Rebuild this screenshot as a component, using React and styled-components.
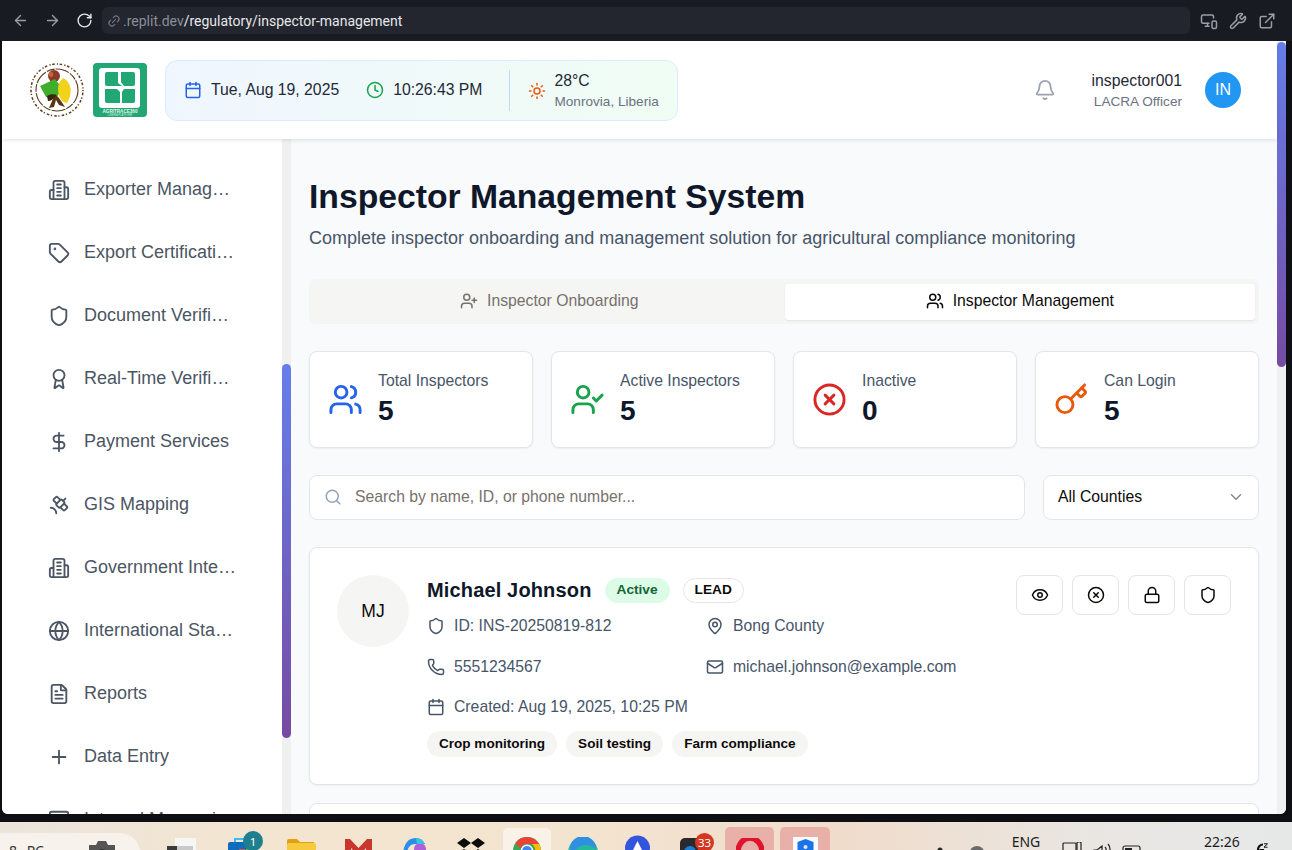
import React from "react";
import styled, { createGlobalStyle } from "styled-components";
import {
  ArrowLeft, ArrowRight, RotateCw, Link2, MonitorSmartphone, Wrench, ExternalLink,
  Calendar, Clock, Sun, Bell, Tag, Shield, Award, DollarSign, Satellite,
  Globe, FileText, Plus, MessageSquare, UserPlus, Users, UserCheck, XCircle, Key,
  Search, ChevronDown, MapPin, Phone, Mail, Eye, Lock,
} from "lucide-react";

const Global = createGlobalStyle`
  html, body { margin: 0; padding: 0; overflow: hidden; background: #0e0f15; }
  * { box-sizing: border-box; }
  body { font-family: "Liberation Sans", Arial, sans-serif; }
`;

const Screen = styled.div`
  width: 1292px;
  height: 850px;
  display: flex;
  flex-direction: column;
  overflow: hidden;
  background: #0e0f15;
`;

/* browser bar */
const Toolbar = styled.div`
  height: 41px;
  flex: none;
  display: flex;
  align-items: center;
  background: #191b23;
  color: #9a9da5;
`;
const NavIcons = styled.div`
  width: 102px;
  flex: none;
  display: flex;
  align-items: center;
  padding-left: 12px;
  gap: 15px;
`;
const AddressBar = styled.div`
  width: 1088px;
  height: 27px;
  display: flex;
  align-items: center;
  gap: 2px;
  padding-left: 5px;
  border-radius: 6px;
  background: #23262f;
  font-family: Roboto, sans-serif;
  font-size: 14px;
`;
const Host = styled.span`
  color: #8b8e96;
`;
const UrlPath = styled.span`
  color: #e6e7ea;
  margin-left: -2px;
`;
const ToolIcons = styled.div`
  display: flex;
  align-items: center;
  gap: 11px;
  margin-left: 10px;
`;

/* app window */
const Viewport = styled.div`
  height: 773px;
  flex: none;
  width: 1284px;
  margin-left: 2px;
  display: flex;
  overflow: hidden;
  border-radius: 0 0 6px 6px;
  background: #fff;
`;
const AppColumn = styled.div`
  width: 1275px;
  flex: none;
  display: flex;
  flex-direction: column;
`;
const PageTrack = styled.div`
  width: 9px;
  flex: none;
  background: #f1f1f1;
`;
const Thumb = styled.div`
  width: 9px;
  border-radius: 5px;
  background: linear-gradient(180deg, #667eea, #764ba2);
  height: ${(p) => p.$height}px;
  margin-top: ${(p) => p.$top}px;
`;

const Header = styled.header`
  height: 98px;
  flex: none;
  display: flex;
  align-items: center;
  padding: 0 36px 0 27px;
  background: #fff;
  box-shadow: 0 1px 4px rgba(0, 0, 0, 0.12);
  position: relative;
  z-index: 2;
`;
const Logos = styled.div`
  display: flex;
  align-items: center;
  gap: 8px;
`;
const InfoStrip = styled.div`
  width: 513px;
  height: 61px;
  margin-left: 18px;
  margin-top: 1px;
  display: flex;
  align-items: center;
  padding-left: 18px;
  border: 1px solid #dbeafe;
  border-radius: 12px;
  background: linear-gradient(90deg, #eff6ff, #f0fdf4);
  color: #1f2937;
  font-size: 15.75px;
`;
const InfoItem = styled.div`
  display: flex;
  align-items: center;
  gap: ${(p) => p.$inner}px;
  margin-right: ${(p) => p.$gap}px;
  padding-bottom: ${(p) => p.$lift || 0}px;
`;
const Divider = styled.div`
  width: 1px;
  height: 41px;
  background: #bfdbfe;
  margin-right: 18px;
`;
const Weather = styled.div`
  display: flex;
  flex-direction: column;
  gap: 4px;
  line-height: 18px;
`;
const WeatherPlace = styled.span`
  font-size: 13.6px;
  line-height: 16px;
  color: #6b7280;
`;
const HeaderRight = styled.div`
  margin-left: auto;
  display: flex;
  align-items: center;
`;
const User = styled.div`
  display: flex;
  flex-direction: column;
  align-items: flex-end;
  margin: 1px 23px 0 36px;
`;
const UserName = styled.span`
  font-size: 15.8px;
  line-height: 22px;
  color: #1f2937;
`;
const UserRole = styled.span`
  font-size: 13.6px;
  line-height: 20px;
  color: #6b7280;
`;
const UserAvatar = styled.div`
  width: 36px;
  height: 36px;
  border-radius: 50%;
  display: flex;
  align-items: center;
  justify-content: center;
  background: #2196f3;
  color: #fff;
  font-size: 16px;
`;

const Body = styled.div`
  flex: 1;
  min-height: 0;
  display: flex;
`;
const Sidebar = styled.nav`
  width: 280px;
  flex: none;
  padding: 19px 0 0 46px;
  display: flex;
  flex-direction: column;
  overflow: hidden;
  background: #fff;
`;
const NavItem = styled.div`
  height: 63px;
  flex: none;
  display: flex;
  align-items: center;
  gap: 14px;
  color: #4b5563;
`;
const NavLabel = styled.span`
  max-width: ${(p) => p.$max}px;
  font-size: 18px;
  white-space: nowrap;
  overflow: hidden;
  text-overflow: ellipsis;
`;
const SideTrack = styled.div`
  width: 9px;
  flex: none;
  background: #f0f0f0;
`;
const Main = styled.main`
  flex: 1;
  min-width: 0;
  overflow: hidden;
  padding: 37px 18px 0 18px;
  background: #f8fafc;
`;
const Title = styled.h1`
  margin: 0;
  font-size: 33.7px;
  line-height: 40px;
  font-weight: 700;
  color: #0f172a;
`;
const Subtitle = styled.p`
  margin: 8px 0 0;
  font-size: 18px;
  line-height: 28px;
  color: #475569;
`;
const Tabs = styled.div`
  margin-top: 27px;
  height: 45px;
  display: grid;
  grid-template-columns: 1fr 1fr;
  padding: 5px 4px 5px 5px;
  border-radius: 6px;
  background: #f5f5f4;
`;
const TabButton = styled.div`
  display: flex;
  align-items: center;
  justify-content: center;
  gap: 9px;
  font-size: 15.75px;
  padding-bottom: 2px;
  border-radius: 4px;
  height: 36px;
  color: ${(p) => (p.$active ? "#0c0a09" : "#78716c")};
  background: ${(p) => (p.$active ? "#fff" : "transparent")};
  box-shadow: ${(p) => (p.$active ? "0 1px 2px rgba(0,0,0,0.08)" : "none")};
`;
const Stats = styled.div`
  margin-top: 27px;
  display: grid;
  grid-template-columns: repeat(4, 1fr);
  gap: 18px;
`;
const Panel = styled.div`
  background: #fff;
  border: 1px solid #e7e5e4;
  border-radius: 8px;
  box-shadow: 0 1px 2px rgba(0, 0, 0, 0.05);
`;
const StatCard = styled(Panel)`
  height: 97px;
  display: flex;
  align-items: flex-start;
  padding: 18px 0 0 18px;
  gap: 15px;
  svg { margin-top: 12px; }
`;
const StatText = styled.div`
  display: flex;
  flex-direction: column;
`;
const StatLabel = styled.span`
  font-size: 15.75px;
  line-height: 22px;
  color: #475569;
`;
const StatValue = styled.span`
  font-size: 28px;
  line-height: 38px;
  font-weight: 700;
  color: #0f172a;
`;
const Filters = styled.div`
  margin-top: 27px;
  display: grid;
  grid-template-columns: 1fr 216px;
  gap: 18px;
`;
const SearchBox = styled(Panel)`
  height: 45px;
  display: flex;
  align-items: center;
  gap: 13px;
  padding: 0 0 2px 14px;
  box-shadow: none;
  font-size: 15.75px;
  color: #78716c;
`;
const SelectBox = styled(Panel)`
  height: 45px;
  display: flex;
  align-items: center;
  justify-content: space-between;
  padding: 0 13px 2px 14px;
  box-shadow: none;
  font-size: 15.75px;
  color: #0c0a09;
`;
const InspectorCard = styled(Panel)`
  margin-top: 27px;
  height: 238px;
  padding: 27px;
  display: flex;
  align-items: flex-start;
`;
const NextCard = styled(Panel)`
  margin-top: 18px;
  height: 100px;
`;
const Initials = styled.div`
  width: 72px;
  height: 72px;
  flex: none;
  border-radius: 50%;
  display: flex;
  align-items: center;
  justify-content: center;
  background: #f5f5f4;
  font-size: 17.5px;
  color: #0c0a09;
`;
const Details = styled.div`
  margin-left: 18px;
  flex: 1;
`;
const NameRow = styled.div`
  display: flex;
  align-items: center;
  height: 30px;
`;
const Name = styled.span`
  font-size: 20px;
  font-weight: 700;
  letter-spacing: 0.15px;
  color: #0f172a;
`;
const Badge = styled.span`
  height: 25px;
  display: inline-flex;
  align-items: center;
  padding: 0 11px 1px;
  border-radius: 13px;
  font-size: 13.7px;
  font-weight: 700;
  margin-left: ${(p) => p.$left}px;
  color: ${(p) => (p.$active ? "#166534" : "#0c0a09")};
  background: ${(p) => (p.$active ? "#dcfce7" : "#fff")};
  border: 1px solid ${(p) => (p.$active ? "#dcfce7" : "#e7e5e4")};
`;
const InfoGrid = styled.div`
  margin-top: 1px;
  display: grid;
  grid-template-columns: 279px 1fr;
  grid-auto-rows: 40.5px;
`;
const InfoCell = styled.div`
  display: flex;
  align-items: center;
  gap: 9px;
  font-size: 15.75px;
  color: #475569;
`;
const TagRow = styled.div`
  margin-top: 3px;
  display: flex;
  gap: 9px;
`;
const Pill = styled.span`
  height: 26px;
  display: inline-flex;
  align-items: center;
  padding: 0 12px;
  border-radius: 13px;
  background: #f5f5f4;
  font-size: 13.55px;
  font-weight: 700;
  color: #0c0a09;
`;
const Actions = styled.div`
  display: flex;
  gap: 9px;
  flex: none;
`;
const ActionButton = styled.div`
  width: 47px;
  height: 40px;
  display: flex;
  align-items: center;
  justify-content: center;
  border: 1px solid #e7e5e4;
  border-radius: 8px;
  color: #0c0a09;
  background: #fff;
`;

/* windows taskbar */
const Gutter = styled.div`
  height: 8px;
  flex: none;
`;
const Taskbar = styled.div`
  height: 28px;
  flex: none;
  display: flex;
  overflow: hidden;
  background: linear-gradient(90deg, #ece4dc 0%, #f3e5d0 20%, #f3e4d0 45%, #f0dccb 65%, #e9e6e2 85%, #e6e8e8 100%);
`;
const SearchPill = styled.div`
  width: 140px;
  height: 40px;
  margin-top: 11px;
  padding: 9px 0 0 9px;
  flex: none;
  display: flex;
  align-items: flex-start;
  border-radius: 0 20px 0 0;
  background: #f7f3ec;
  font-family: "Noto Sans", sans-serif;
  font-size: 14px;
  word-spacing: 6px;
  line-height: 18px;
  color: #333;
`;
const Camera = styled.div`
  margin: -2px 0 0 43px;
`;
const Slot = styled.div`
  flex: none;
  width: ${(p) => p.$width}px;
  margin-left: ${(p) => p.$left}px;
  margin-top: ${(p) => p.$inset || 0}px;
  position: relative;
  display: flex;
  justify-content: center;
  padding-top: ${(p) => p.$top}px;
  border-radius: 5px 5px 0 0;
  background: ${(p) => p.$bg || "transparent"};
`;
const CountDot = styled.span`
  position: absolute;
  width: ${(p) => p.$size}px;
  height: ${(p) => p.$size}px;
  left: ${(p) => p.$left}px;
  top: ${(p) => p.$top}px;
  border-radius: 50%;
  display: flex;
  align-items: center;
  justify-content: center;
  font-family: "Noto Sans", sans-serif;
  font-size: 11.5px;
  color: #fff;
  background: ${(p) => p.$bg};
`;
const TrayText = styled.span`
  font-family: "Noto Sans", sans-serif;
  font-size: 14px;
  line-height: 16px;
  white-space: nowrap;
  color: #1c1c1c;
`;

const Building = ({ size = 22 }) => (
  <svg width={size} height={size} viewBox="0 0 24 24" fill="none" stroke="currentColor" strokeWidth="2" strokeLinecap="round" strokeLinejoin="round">
    <path d="M6 22V4a2 2 0 0 1 2-2h8a2 2 0 0 1 2 2v18Z" />
    <path d="M6 12H4a2 2 0 0 0-2 2v6a2 2 0 0 0 2 2h2" />
    <path d="M18 9h2a2 2 0 0 1 2 2v9a2 2 0 0 1-2 2h-2" />
    <path d="M10 6h4" />
    <path d="M10 10h4" />
    <path d="M10 14h4" />
    <path d="M10 18h4" />
  </svg>
);

const sideItems = [
  [Building, "Exporter Management", 153],
  [Tag, "Export Certification", 151],
  [Shield, "Document Verification", 153],
  [Award, "Real-Time Verification", 153],
  [DollarSign, "Payment Services", 153],
  [Satellite, "GIS Mapping", 153],
  [Building, "Government Integration", 153],
  [Globe, "International Standards", 153],
  [FileText, "Reports", 153],
  [Plus, "Data Entry", 153],
  [MessageSquare, "Internal Messaging", 153],
];

const stats = [
  [Users, "#2563eb", "Total Inspectors", "5"],
  [UserCheck, "#16a34a", "Active Inspectors", "5"],
  [XCircle, "#dc2626", "Inactive", "0"],
  [Key, "#ea580c", "Can Login", "5"],
];

const Seal = () => (
  <svg width="56" height="56" viewBox="0 0 56 56">
    <circle cx="28" cy="28" r="26" fill="none" stroke="#5c3a1a" strokeWidth="1.5" strokeDasharray="1.2 1.6 2.6 2.2" />
    <circle cx="28" cy="28" r="21" fill="#fff" stroke="#5c3a1a" strokeWidth="1.1" strokeDasharray="14 1.2 8 1" />
    <circle cx="25" cy="14" r="6" fill="#8a3b2a" />
    <circle cx="22" cy="12.5" r="2.4" fill="#c9642f" />
    <path d="M11 24 L26 17 L33 26 L27 37 L17 35 Z" fill="#3fae2a" />
    <path d="M34 16 C41 19 45 29 38 41 C33 41 29 34 29 27 C29 22 31 19 34 16 Z" fill="#f2d21a" />
    <path d="M20 46 L26 32 L30 36 L36 45 L30 43 L27 38 L25 45 Z" fill="#5b3413" />
    <path d="M18 34 C21 32 25 32 27 33 C25 37 22 39 19 39 Z" fill="#3a2410" />
  </svg>
);

const GreenLogo = () => (
  <svg width="54" height="54" viewBox="0 0 54 54">
    <rect width="54" height="54" rx="4" fill="#22a673" />
    <rect x="6" y="5" width="41" height="40" rx="3" fill="#fff" />
    <path d="M12 11a2 2 0 0 1 2-2h11v11l4 3h-15a2 2 0 0 1-2-2z" fill="#22a673" />
    <path d="M28 9h12a2 2 0 0 1 2 2v10a2 2 0 0 1-2 2h-9l-3-4z" fill="#22a673" />
    <path d="M12 26h12l3 3v11h-13a2 2 0 0 1-2-2z" fill="#22a673" />
    <path d="M31 26h11v12a2 2 0 0 1-2 2h-11v-11z" fill="#22a673" />
    <text x="27" y="50" textAnchor="middle" fontSize="4.6" fontWeight="700" fill="#e6f7ef" fontFamily="Liberation Sans">AGRITRACE360</text>
    <text x="27" y="53.4" textAnchor="middle" fontSize="2.6" fill="#cdeee0" fontFamily="Liberation Sans">LIBERIA PLATFORM</text>
  </svg>
);

const TaskIcon = ({ children, w = 30 }) => (
  <svg width={w} height="30" viewBox={`0 0 ${w} 30`} fill="none">
    {children}
  </svg>
);

export default function App() {
  return (
    <Screen>
      <Global />
      <Toolbar>
        <NavIcons>
          <ArrowLeft size={17} />
          <ArrowRight size={17} />
          <RotateCw size={17} color="#e6e7ea" />
        </NavIcons>
        <AddressBar>
          <Link2 size={14} color="#72757d" style={{ transform: "rotate(-45deg)" }} />
          <Host>.replit.dev</Host>
          <UrlPath>/regulatory/inspector-management</UrlPath>
        </AddressBar>
        <ToolIcons>
          <MonitorSmartphone size={18} />
          <Wrench size={18} />
          <ExternalLink size={18} />
        </ToolIcons>
      </Toolbar>

      <Viewport>
        <AppColumn>
          <Header>
            <Logos>
              <Seal />
              <GreenLogo />
            </Logos>
            <InfoStrip>
              <InfoItem $gap={27} $inner={9} $lift={2}>
                <Calendar size={18} color="#2563eb" />
                Tue, Aug 19, 2025
              </InfoItem>
              <InfoItem $gap={27} $inner={9} $lift={2}>
                <Clock size={18} color="#16a34a" />
                10:26:43 PM
              </InfoItem>
              <Divider />
              <InfoItem $gap={0} $inner={8}>
                <Sun size={18} color="#ea580c" />
                <Weather>
                  <span>28°C</span>
                  <WeatherPlace>Monrovia, Liberia</WeatherPlace>
                </Weather>
              </InfoItem>
            </InfoStrip>
            <HeaderRight>
              <Bell size={22} color="#9ca3af" />
              <User>
                <UserName>inspector001</UserName>
                <UserRole>LACRA Officer</UserRole>
              </User>
              <UserAvatar>IN</UserAvatar>
            </HeaderRight>
          </Header>

          <Body>
            <Sidebar>
              {sideItems.map(([Icon, label, max]) => (
                <NavItem key={label}>
                  <Icon size={22} />
                  <NavLabel $max={max}>{label}</NavLabel>
                </NavItem>
              ))}
            </Sidebar>
            <SideTrack>
              <Thumb $top={225} $height={374} />
            </SideTrack>
            <Main>
              <Title>Inspector Management System</Title>
              <Subtitle>Complete inspector onboarding and management solution for agricultural compliance monitoring</Subtitle>
              <Tabs>
                <TabButton>
                  <UserPlus size={18} />
                  Inspector Onboarding
                </TabButton>
                <TabButton $active>
                  <Users size={18} />
                  Inspector Management
                </TabButton>
              </Tabs>
              <Stats>
                {stats.map(([Icon, color, label, value]) => (
                  <StatCard key={label}>
                    <Icon size={35} color={color} />
                    <StatText>
                      <StatLabel>{label}</StatLabel>
                      <StatValue>{value}</StatValue>
                    </StatText>
                  </StatCard>
                ))}
              </Stats>
              <Filters>
                <SearchBox>
                  <Search size={18} color="#94a3b8" />
                  Search by name, ID, or phone number...
                </SearchBox>
                <SelectBox>
                  All Counties
                  <ChevronDown size={18} color="#8a8a8a" />
                </SelectBox>
              </Filters>
              <InspectorCard>
                <Initials>MJ</Initials>
                <Details>
                  <NameRow>
                    <Name>Michael Johnson</Name>
                    <Badge $active $left={13}>Active</Badge>
                    <Badge $left={13}>LEAD</Badge>
                  </NameRow>
                  <InfoGrid>
                    <InfoCell><Shield size={18} />ID: INS-20250819-812</InfoCell>
                    <InfoCell><MapPin size={18} />Bong County</InfoCell>
                    <InfoCell><Phone size={18} />5551234567</InfoCell>
                    <InfoCell><Mail size={18} />michael.johnson@example.com</InfoCell>
                    <InfoCell><Calendar size={18} />Created: Aug 19, 2025, 10:25 PM</InfoCell>
                  </InfoGrid>
                  <TagRow>
                    <Pill>Crop monitoring</Pill>
                    <Pill>Soil testing</Pill>
                    <Pill>Farm compliance</Pill>
                  </TagRow>
                </Details>
                <Actions>
                  <ActionButton><Eye size={18} /></ActionButton>
                  <ActionButton><XCircle size={18} /></ActionButton>
                  <ActionButton><Lock size={18} /></ActionButton>
                  <ActionButton><Shield size={18} /></ActionButton>
                </Actions>
              </InspectorCard>
              <NextCard />
            </Main>
          </Body>
        </AppColumn>
        <PageTrack>
          <Thumb $top={1} $height={325} />
        </PageTrack>
      </Viewport>
      <Gutter />

      <Taskbar>
        <SearchPill>
          8 PC
          <Camera>
            <TaskIcon><path d="M2 5h7l2-4h8l2 4h7v22H2z" fill="#555" /><circle cx="15" cy="14" r="5" fill="#333" /></TaskIcon>
          </Camera>
        </SearchPill>
        <Slot $width={29} $left={27} $top={16}>
          <TaskIcon w={29}><rect x="8" width="21" height="20" fill="#f6f6f6" /><rect y="8" width="10" height="14" fill="#3b3b3b" /><rect x="10" y="8" width="16" height="14" fill="#c9c9c9" /></TaskIcon>
        </Slot>
        <Slot $width={35} $left={31} $top={16}>
          <TaskIcon w={35}><rect x="1" y="4" width="28" height="24" rx="2" fill="#0f6cbd" /><path d="M8 4V1h12v3" stroke="#38bdf8" strokeWidth="2" /><rect x="12" y="11" width="6" height="6" fill="#e8542a" /><rect x="19" y="11" width="6" height="6" fill="#7fba00" /></TaskIcon>
          <CountDot $size={20} $left={16} $top={9} $bg="#1f7f8f">1</CountDot>
        </Slot>
        <Slot $width={30} $left={24} $top={17}>
          <TaskIcon><path d="M1 2a2 2 0 0 1 2-2h8l3 3h14v6H1z" fill="#e0a010" /><rect x="1" y="4" width="29" height="22" rx="2" fill="#f7c93e" /></TaskIcon>
        </Slot>
        <Slot $width={27} $left={29} $top={15}>
          <TaskIcon w={27}><path d="M0 2h5l8.500 9L22 2h5v26h-6V11l-7.500 8L6 11v17H0z" fill="#c8362e" /></TaskIcon>
        </Slot>
        <Slot $width={30} $left={28} $top={16}>
          <TaskIcon><path d="M3 14C5 4 9 0 16 0c4 0 7 2 9 6H15C10 6 8 10 7 14z" fill="#2a8fe8" /><circle cx="20" cy="11" r="6" fill="#b05fd8" /><path d="M16 0c4 0 7 2 9 6h-8z" fill="#38c2e0" /></TaskIcon>
        </Slot>
        <Slot $width={30} $left={26} $top={16}>
          <TaskIcon><path d="M8 0l7 5-7 5-7-5zM22 0l7 5-7 5-7-5zM8 11l7 5-7 5-7-5zM22 11l7 5-7 5-7-5z" fill="#0b0b0b" /></TaskIcon>
        </Slot>
        <Slot $width={48} $left={17} $top={9} $inset={6} $bg="#f8f2e9">
          <TaskIcon w={28}><circle cx="14" cy="14" r="14" fill="#34a853" /><path d="M14 0a14 14 0 0 1 12.100 7H14a7 7 0 0 0-6.500 4.500L2.400 6A14 14 0 0 1 14 0z" fill="#ea4335" /><path d="M26.100 7A14 14 0 0 1 14 28l6-10a7 7 0 0 0-1-11z" fill="#fbbc05" /><circle cx="14" cy="14" r="6.500" fill="#fff" /><circle cx="14" cy="14" r="5" fill="#4285f4" /></TaskIcon>
        </Slot>
        <Slot $width={30} $left={17} $top={15}>
          <TaskIcon><circle cx="15" cy="15" r="15" fill="#25b89a" /><path d="M2 12A13 13 0 0 1 28 12C22 6 10 6 6 16z" fill="#2f8fe0" /><circle cx="15" cy="18" r="5" fill="#0f6cbd" /></TaskIcon>
        </Slot>
        <Slot $width={25} $left={27} $top={13}>
          <TaskIcon w={25}><circle cx="12.500" cy="13" r="12.500" fill="#3355dd" /><path d="M12.500 6l6 12h-12z" fill="#fff" /></TaskIcon>
        </Slot>
        <Slot $width={24} $left={30} $top={16}>
          <TaskIcon w={24}><rect width="24" height="24" rx="5" fill="#2a2a2e" /><circle cx="10" cy="14" r="6" fill="#1c7fd6" /></TaskIcon>
          <CountDot $size={19} $left={15} $top={11} $bg="#d5361f">33</CountDot>
        </Slot>
        <Slot $width={49} $left={21} $top={11} $inset={5} $bg="#e8b0a8">
          <TaskIcon w={28}><ellipse cx="14" cy="14" rx="12" ry="14" stroke="#e0142c" strokeWidth="5.500" /></TaskIcon>
        </Slot>
        <Slot $width={50} $left={6} $top={10} $inset={5} $bg="#e8b0a8">
          <TaskIcon w={25}><rect width="25" height="24" fill="#fbfbfb" /><path d="M12.500 2l8 3v8c0 5-4 8-8 10-4-2-8-5-8-10V5z" fill="#1a73e8" /><circle cx="12.500" cy="10" r="2" fill="#dbe9fb" /></TaskIcon>
        </Slot>
        <Slot $width={6} $left={107} $top={25}>
          <TaskIcon w={6}><circle cx="3" cy="3" r="2.500" fill="#2b2b2b" /></TaskIcon>
        </Slot>
        <Slot $width={14} $left={27} $top={23}>
          <TaskIcon w={14}><ellipse cx="7" cy="7" rx="7" ry="6" fill="#6b6b6b" /></TaskIcon>
        </Slot>
        <Slot $width={30} $left={27} $top={12}>
          <TrayText>ENG</TrayText>
        </Slot>
        <Slot $width={20} $left={21} $top={20}>
          <TaskIcon w={20}><rect x="1" y="1" width="13" height="12" rx="1" stroke="#222" strokeWidth="1.200" /><rect x="15" y="0" width="4" height="12" rx="1" stroke="#222" strokeWidth="1.200" /></TaskIcon>
        </Slot>
        <Slot $width={19} $left={11} $top={21}>
          <TaskIcon w={19}><path d="M1 7h3l5-4v14l-5-4H1z" stroke="#222" strokeWidth="1.200" /><path d="M12 4c2 2 2 8 0 10M15 1c3 3 3 13 0 16" stroke="#222" strokeWidth="1.200" /></TaskIcon>
        </Slot>
        <Slot $width={20} $left={10} $top={23}>
          <TaskIcon w={20}><rect x="1" y="1" width="17" height="11" rx="2" stroke="#222" strokeWidth="1.200" /><rect x="3" y="3" width="7" height="7" fill="#222" /></TaskIcon>
        </Slot>
        <Slot $width={36} $left={62} $top={12}>
          <TrayText>22:26</TrayText>
        </Slot>
        <Slot $width={14} $left={14} $top={21}>
          <TaskIcon w={14}><path d="M9 1.500a5 5 0 1 0 0 10V7H5.500" stroke="#111" strokeWidth="2.200" /><path d="M10 0.800h3.500L10 4.200h3.500" stroke="#111" strokeWidth="1" /></TaskIcon>
        </Slot>
      </Taskbar>
    </Screen>
  );
}
